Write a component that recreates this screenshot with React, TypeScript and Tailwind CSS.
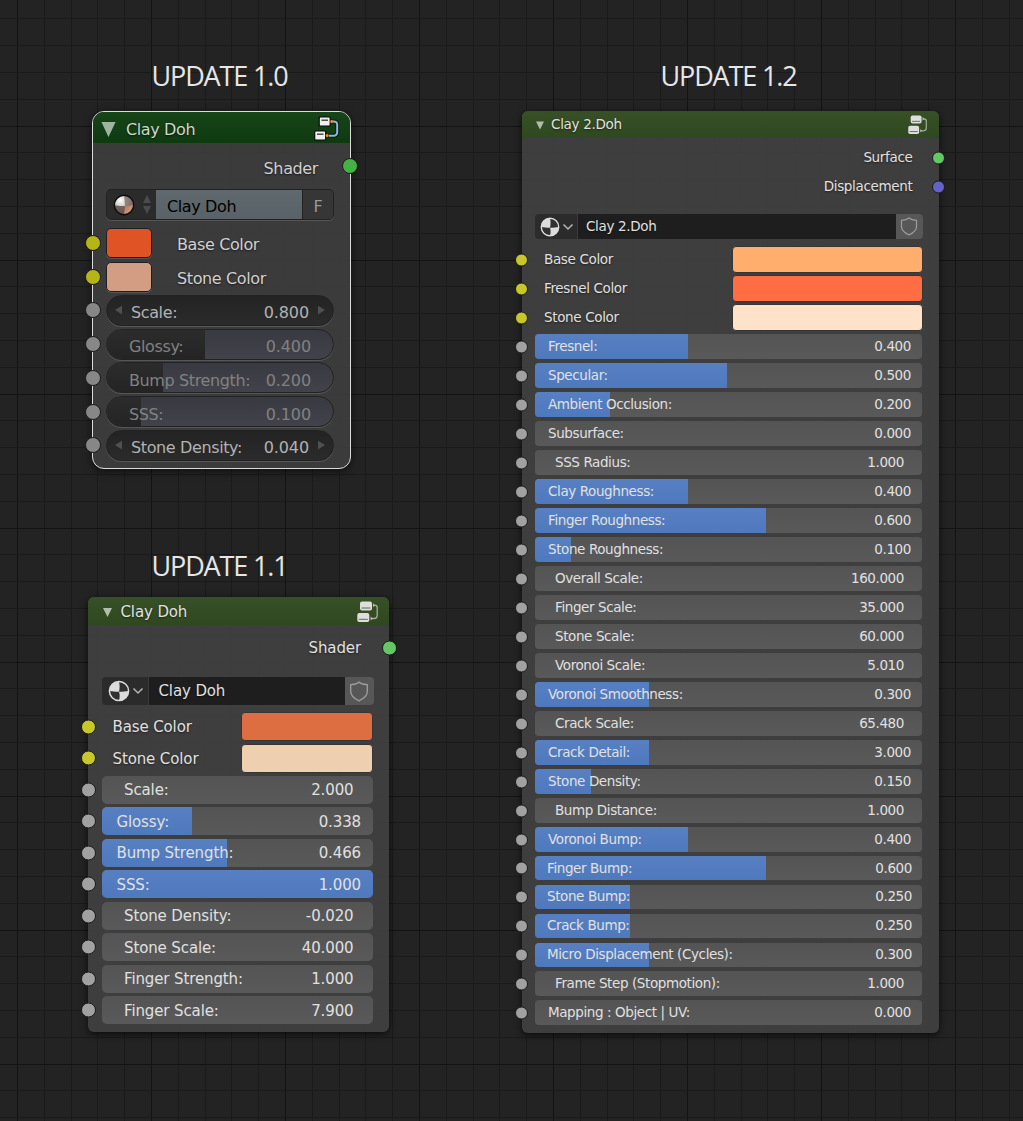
import React from 'react';
import clsx from 'clsx';

type Row = {
  label: string;
  value?: string;
  color?: string;
  fill?: number; // fill width in px, undefined = plain number field
  short?: boolean;
};

const legacyRows: Row[] = [
  { label: 'Base Color', color: '#e05324' },
  { label: 'Stone Color', color: '#d39d84' },
  { label: 'Scale:', value: '0.800' },
  { label: 'Glossy:', value: '0.400', fill: 99 },
  { label: 'Bump Strength:', value: '0.200', fill: 57 },
  { label: 'SSS:', value: '0.100', fill: 35 },
  { label: 'Stone Density:', value: '0.040' },
];

const clayRows: Row[] = [
  { label: 'Base Color', color: '#dc6e42' },
  { label: 'Stone Color', color: '#eecfb0' },
  { label: 'Scale:', value: '2.000' },
  { label: 'Glossy:', value: '0.338', fill: 90 },
  { label: 'Bump Strength:', value: '0.466', fill: 125 },
  { label: 'SSS:', value: '1.000', fill: 271 },
  { label: 'Stone Density:', value: '-0.020' },
  { label: 'Stone Scale:', value: '40.000' },
  { label: 'Finger Strength:', value: '1.000' },
  { label: 'Finger Scale:', value: '7.900' },
];

const clay2Rows: Row[] = [
  { label: 'Base Color', color: '#ffae6d' },
  { label: 'Fresnel Color', color: '#ff6e42' },
  { label: 'Stone Color', color: '#ffe2c9' },
  { label: 'Fresnel:', value: '0.400', fill: 153 },
  { label: 'Specular:', value: '0.500', fill: 192 },
  { label: 'Ambient Occlusion:', value: '0.200', fill: 75 },
  { label: 'Subsurface:', value: '0.000', fill: 0 },
  { label: 'SSS Radius:', value: '1.000' },
  { label: 'Clay Roughness:', value: '0.400', fill: 153 },
  { label: 'Finger Roughness:', value: '0.600', fill: 231 },
  { label: 'Stone Roughness:', value: '0.100', fill: 36 },
  { label: 'Overall Scale:', value: '160.000' },
  { label: 'Finger Scale:', value: '35.000' },
  { label: 'Stone Scale:', value: '60.000' },
  { label: 'Voronoi Scale:', value: '5.010' },
  { label: 'Voronoi Smoothness:', value: '0.300', fill: 114 },
  { label: 'Crack Scale:', value: '65.480' },
  { label: 'Crack Detail:', value: '3.000', fill: 114 },
  { label: 'Stone Density:', value: '0.150', fill: 56 },
  { label: 'Bump Distance:', value: '1.000' },
  { label: 'Voronoi Bump:', value: '0.400', fill: 153 },
  { label: 'Finger Bump:', value: '0.600', fill: 231, short: true },
  { label: 'Stone Bump:', value: '0.250', fill: 95, short: true },
  { label: 'Crack Bump:', value: '0.250', fill: 95, short: true },
  { label: 'Micro Displacement (Cycles):', value: '0.300', fill: 114, short: true },
  { label: 'Frame Step (Stopmotion):', value: '1.000' },
  { label: 'Mapping : Object | UV:', value: '0.000', fill: 0 },
];

const GRID = 26.8;
const gridLines = Array.from({ length: 43 }, (_, i) => i);

const Title = ({ children, className }: { children: React.ReactNode; className?: string }) => (
  <h2
    className={clsx(
      "h-8 whitespace-nowrap font-['Open_Sans','Noto_Sans',sans-serif] text-[27px] leading-8 tracking-[-1.15px] text-[#e6e6e6]",
      className
    )}
  >
    {children}
  </h2>
);

// Sockets sit on the node border
const Socket = ({ className }: { className: string }) => (
  <span className={clsx('absolute top-1/2 -translate-y-1/2 rounded-full border border-[#1c1c1c]', className)} />
);

const NodeTreeIcon = ({ className }: { className?: string }) => (
  <svg viewBox="0 0 21 21" className={className} fill="none">
    <rect x="3" y="0.5" width="12" height="9" rx="2" fill="#dedede" />
    <path d="M4.5 7h9" stroke="#5b6b50" strokeWidth="1" />
    <rect x="0.3" y="12" width="12" height="9" rx="2" fill="#dedede" />
    <path d="M1.8 18.3h9" stroke="#5b6b50" strokeWidth="1" />
    <path d="M16 2.2l2.6 2.2L16 6z" fill="#b5bcae" />
    <path d="M17.5 4.2c2 .1 2.7.8 2.7 2.3v8c0 2-.8 3-3 3h-2.5" stroke="#a6ae9e" strokeWidth="1.3" />
    <path d="M13.6 15.6l2 1.9-2 1.9z" fill="#c5cabf" />
  </svg>
);

const LegacyTreeIcon = () => (
  <svg viewBox="0 0 26 26" className="h-[26px] w-[26px]" fill="none">
    <path d="M16 6.5h3.5c2.4 0 3.7 1.2 3.7 3.4v7c0 2.6-1.3 3.8-4 3.8H14" stroke="#0a200b" strokeWidth="4" />
    <path d="M17 6.5h2.5c2.4 0 3.7 1.2 3.7 3.4v7c0 2.6-1.3 3.8-4 3.8H15" stroke="#8fb4ea" strokeWidth="2" />
    <rect x="5.2" y="2" width="11" height="9" rx="1" fill="#f1eeee" stroke="#0b0b0b" strokeWidth="1.2" />
    <path d="M7.5 5.2h6.5" stroke="#333" strokeWidth="1.3" />
    <rect x="0.7" y="16" width="11" height="9" rx="1" fill="#f1eeee" stroke="#0b0b0b" strokeWidth="1.2" />
    <path d="M3 19.2h6.5" stroke="#333" strokeWidth="1.3" />
    <circle cx="17.7" cy="6.6" r="1.5" fill="#f08a1c" />
    <circle cx="13.2" cy="20.6" r="1.5" fill="#f08a1c" />
  </svg>
);

const MaterialIcon = ({ className }: { className?: string }) => (
  <svg viewBox="0 0 22 22" className={className}>
    <circle cx="11" cy="11" r="9.6" fill="#303030" stroke="#dcdcdc" strokeWidth="1.5" />
    <path d="M11 11.8C7.500 11.800 4 11.500 1.400 11A9.600 9.600 0 0 1 11 1.400c.8 3 .9 7 0 10.400z" fill="#dcdcdc" />
    <path d="M11 11.800c3.500 0 7-.3 9.600-.8A9.600 9.600 0 0 1 11 20.600c.9-3 .9-6 0-8.800z" fill="#dcdcdc" />
  </svg>
);

const LegacyMaterialIcon = () => (
  <svg viewBox="0 0 22 22" className="h-[22px] w-[22px]">
    <defs>
      <radialGradient id="ball" cx="0.32" cy="0.25" r="0.85">
        <stop offset="0" stopColor="#ffffff" />
        <stop offset="0.5" stopColor="#c4bebc" />
        <stop offset="1" stopColor="#8c5a45" />
      </radialGradient>
      <linearGradient id="warm" x1="0" y1="0" x2="1" y2="1">
        <stop offset="0" stopColor="#a5786a" />
        <stop offset="1" stopColor="#f2a672" />
      </linearGradient>
    </defs>
    <circle cx="11" cy="11" r="9.5" fill="url(#ball)" />
    <path d="M12 12c-.2-4-.5-7-1-10.500a9.500 9.500 0 0 1 9.500 9.500c-3 1-5 1-8.500 1z" fill="#765f5b" opacity="0.7" />
    <path d="M12 12c-4 .2-7.500 0-10.500-1A9.500 9.500 0 0 0 11 20.500c.8-3 1-6 1-8.500z" fill="#5f4743" opacity="0.8" />
    <path d="M12 12c3.500 0 5.500 0 8.500-1A9.500 9.500 0 0 1 11 20.500c.8-3 1-6 1-8.500z" fill="url(#warm)" />
    <circle cx="11" cy="11" r="9.7" fill="none" stroke="#0d0d0d" strokeWidth="1.4" />
  </svg>
);

const Chevron = () => (
  <svg viewBox="0 0 12 8" className="h-2 w-3" fill="none">
    <path d="M1.5 1.5L6 6l4.5-4.5" stroke="#b4b4b4" strokeWidth="1.5" />
  </svg>
);

const Shield = ({ className }: { className?: string }) => (
  <svg viewBox="0 0 20 22" className={className} fill="none">
    <path
      d="M10 1.2c2 1.7 5 2.5 8.7 2.6v7.2c0 4.3-3.4 7.3-8.7 9.8-5.3-2.5-8.7-5.5-8.7-9.8V3.8C5 3.7 8 2.9 10 1.2z"
      stroke="#9a9a9a"
      strokeWidth="1.5"
    />
  </svg>
);

const Arrow = ({ flip }: { flip?: boolean }) => (
  <svg viewBox="0 0 8 10" className={clsx('h-[10px] w-[7px]', flip && 'rotate-180')}>
    <path d="M8 0v10L0 5z" fill="#505050" />
  </svg>
);

const LegacyNode = () => (
  <section className="ml-[92px] flex h-[358px] w-[259px] flex-col rounded-xl border border-[#dcdcdc] bg-[#3c3c3c]/97 text-base tracking-[-0.38px] text-[#d0d0d0] shadow-[0_2px_9px_rgba(0,0,0,0.6)] [text-shadow:0_1px_2px_rgba(0,0,0,0.6)]">
    <header className="flex h-[30.5px] items-center rounded-t-[11px] bg-linear-to-b from-[#164518] to-[#0e3a10] pl-[7.5px]">
      <svg viewBox="0 0 15 16" className="mt-[5px] h-[15px] w-[15px]">
        <path d="M0 0h15L7.5 16z" fill="#9db59e" />
      </svg>
      <span className="mt-[6px] ml-[10.5px] text-[#cfd5cf]">Clay Doh</span>
      <span className="mt-px mr-[10px] ml-auto">
        <LegacyTreeIcon />
      </span>
    </header>
    <div className="relative mt-[8px] flex h-[31px] items-center justify-end pr-[32px]">
      <span className="pt-[5px]">Shader</span>
      <Socket className="-right-[8px] h-[16px] w-[16px] bg-[#43b243]" />
    </div>

    <div className="mt-[7.5px] ml-[13px] flex h-[31px] w-[228px] rounded-[5px] border border-[#222] bg-[#2b2b2b] shadow-[0_1px_0_#555] [text-shadow:none]">
      <div className="flex w-[49px] items-center justify-between pr-[5px] pl-[6px]">
        <LegacyMaterialIcon />
        <span className="flex flex-col gap-[3px]">
          <svg viewBox="0 0 8 8" className="h-2 w-2"><path d="M4 0l4 8H0z" fill="#4b4b4b" /></svg>
          <svg viewBox="0 0 8 8" className="h-2 w-2"><path d="M0 0h8L4 8z" fill="#4b4b4b" /></svg>
        </span>
      </div>
      <div className="flex w-[147px] items-center border-r border-[#222] bg-linear-to-b from-[#5f696e] to-[#596266] pt-[5px] pl-[11px] text-black">
        Clay Doh
      </div>
      <div className="flex flex-1 items-center justify-center rounded-r-[4px] bg-[#363636] pt-[5px] text-[#999]">F</div>
    </div>

    <div className="mt-[6px] flex flex-col">
      {legacyRows.map((row) => (
        <div key={row.label} className="relative flex h-[33.75px] items-center pl-[13px]">
          <Socket
            className={clsx('-left-[8px] h-[16px] w-[16px]', row.color ? 'bg-[#b5b516]' : 'bg-[#878787]')}
          />
          {row.color ? (
            <>
              <span
                className="h-[30px] w-[46px] rounded-[5px] border border-[#1f1f1f] shadow-[0_1px_0_#555]"
                style={{ backgroundColor: row.color }}
              />
              <span className="ml-[25px] pt-[5px]">{row.label}</span>
            </>
          ) : (
            <div
              className={clsx(
                'relative flex h-[31px] w-[228px] items-center overflow-hidden rounded-full border border-[#222] shadow-[0_1px_0_#565656] [text-shadow:none]',
                row.fill
                  ? 'bg-linear-to-b from-[#393a41] to-[#42434a] pr-[22px] pl-[22px] text-[#818181]'
                  : 'bg-linear-to-b from-[#232323] to-[#2b2b2b] px-[8px] text-[#b2b2b2]'
              )}
            >
              {row.fill ? (
                <span
                  className="absolute inset-y-0 left-0 bg-linear-to-b from-[#2c2c2c] to-[#242424]"
                  style={{ width: row.fill - 1 }}
                />
              ) : (
                <Arrow />
              )}
              <span className={clsx('relative pt-[6px]', !row.fill && 'ml-[9px]')}>{row.label}</span>
              <span className={clsx('relative ml-auto pt-[6px] tracking-[-0.1px]', !row.fill && 'mr-[9px]')}>
                {row.value}
              </span>
              {!row.fill && <Arrow flip />}
            </div>
          )}
        </div>
      ))}
    </div>
  </section>
);

const ClayNode = () => (
  <section className="ml-[88px] flex h-[435px] w-[301px] flex-col rounded-md bg-[#3f3f3f]/97 text-[15px] tracking-[-0.12px] text-[#e0e0e0] shadow-[0_2px_7px_rgba(0,0,0,0.7)] [text-shadow:0_1px_2px_rgba(0,0,0,0.5)]">
    <header className="flex h-[28px] items-center rounded-t-md bg-linear-to-b from-[#375026] to-[#304820] pl-[14.5px]">
      <svg viewBox="0 0 9 9" className="mt-[3px] h-[9px] w-[9px]">
        <path d="M0 0h9L4.5 9z" fill="#b3bda9" />
      </svg>
      <span className="mt-[2px] ml-[9px]">Clay Doh</span>
      <NodeTreeIcon className="mt-px mr-[11px] ml-auto h-[21px] w-[21px]" />
    </header>
    <div className="relative mt-[7px] flex h-[31px] items-center justify-end pr-[28px]">
      <span className="pt-[2px]">Shader</span>
      <Socket className="-right-[7.5px] h-[15px] w-[15px] bg-[#63c763]" />
    </div>

    <div className="mt-[14px] ml-[14px] flex h-[28px] w-[272px] overflow-hidden rounded-[4px]">
      <div className="flex w-[46px] items-center justify-between bg-[#2b2b2b] pr-[4px] pl-[6px]">
        <MaterialIcon className="h-[22px] w-[22px]" />
        <Chevron />
      </div>
      <div className="flex flex-1 items-center border-l border-[#3a3a3a] bg-[#1e1e1e] pl-[9.5px]">Clay Doh</div>
      <div className="flex w-[29px] items-center justify-center bg-[#575757] pr-[2px]">
        <Shield className="h-[21px] w-5" />
      </div>
    </div>

    <div className="mt-[6px] flex flex-col">
      {clayRows.map((row) => (
        <div key={row.label} className="relative flex h-[31.5px] items-center pl-[14px]">
          <Socket className={clsx('-left-[7.5px] h-[15px] w-[15px]', row.color ? 'bg-[#c7c729]' : 'bg-[#a1a1a1]')} />
          {row.color ? (
            <>
              <span className="w-[139px] pt-[2px] pl-[10.5px]">{row.label}</span>
              <span
                className="h-[29px] w-[132px] rounded-[4px] border border-[#353535]"
                style={{ backgroundColor: row.color }}
              />
            </>
          ) : (
            <div className="relative flex h-[28px] w-[270.5px] items-center overflow-hidden rounded-[5px] bg-linear-to-b from-[#545454] to-[#595959] [text-shadow:none]">
              {!!row.fill && (
                <span
                  className="absolute inset-y-0 left-0 bg-linear-to-b from-[#5680c2] to-[#4f79bd]"
                  style={{ width: row.fill }}
                />
              )}
              <span className={clsx('relative pt-[2px]', row.fill === undefined ? 'ml-[22px]' : 'ml-[14.5px]')}>
                {row.label}
              </span>
              <span className={clsx('relative ml-auto pt-[2px]', row.fill === undefined ? 'mr-[19px]' : 'mr-[11.5px]')}>
                {row.value}
              </span>
            </div>
          )}
        </div>
      ))}
    </div>
  </section>
);

const Clay2Node = () => (
  <section className="flex h-[922px] w-[417px] flex-col rounded-md bg-[#3f3f3f]/97 text-[13.5px] tracking-[-0.4px] text-[#e0e0e0] shadow-[0_2px_7px_rgba(0,0,0,0.7)] [text-shadow:0_1px_2px_rgba(0,0,0,0.5)]">
    <header className="flex h-[26.5px] items-center rounded-t-md bg-linear-to-b from-[#375026] to-[#304820] pl-[13.5px] tracking-[-0.3px]">
      <svg viewBox="0 0 9 9" className="mt-[3px] h-[9px] w-[8px]">
        <path d="M0 0h9L4.5 9z" fill="#b3bda9" />
      </svg>
      <span className="ml-[7.5px]">Clay 2.Doh</span>
      <NodeTreeIcon className="mt-px mr-[12.5px] ml-auto h-[19px] w-[19px]" />
    </header>
    <div className="mt-[5.5px] flex flex-col tracking-[-0.33px]">
      <div className="relative flex h-[29px] items-center justify-end pr-[26.5px]">
        <span>Surface</span>
        <Socket className="-right-[6px] h-[13px] w-[13px] bg-[#63c763]" />
      </div>
      <div className="relative flex h-[29px] items-center justify-end pr-[26.5px]">
        <span>Displacement</span>
        <Socket className="-right-[6px] h-[13px] w-[13px] bg-[#6363c7]" />
      </div>
    </div>

    <div className="mt-[13px] ml-[13px] flex h-[25px] w-[388px] overflow-hidden rounded-[4px] tracking-[-0.33px]">
      <div className="flex w-[42px] items-center justify-between bg-[#2b2b2b] pr-[3px] pl-[5px]">
        <MaterialIcon className="h-5 w-5" />
        <Chevron />
      </div>
      <div className="flex flex-1 items-center border-l border-[#3a3a3a] bg-[#1e1e1e] pl-[8px]">Clay 2.Doh</div>
      <div className="flex w-[27px] items-center justify-center bg-[#575757] pr-[2px]">
        <Shield className="h-[19px] w-[18px]" />
      </div>
    </div>

    <div className="mt-[6px] flex flex-col">
      {clay2Rows.map((row) => (
        <div
          key={row.label}
          className={clsx('relative flex items-center pl-[13px]', row.short ? 'h-[28.75px]' : 'h-[29px]')}
        >
          <Socket className={clsx('-left-[7px] h-[13px] w-[13px]', row.color ? 'bg-[#c7c729]' : 'bg-[#a1a1a1]')} />
          {row.color ? (
            <>
              <span className="w-[197px] pl-[9px] tracking-[-0.35px]">{row.label}</span>
              <span
                className="h-[27px] w-[191px] rounded-[4px] border border-[#353535]"
                style={{ backgroundColor: row.color }}
              />
            </>
          ) : (
            <div
              className={clsx(
                'relative flex w-[387px] items-center overflow-hidden rounded-[4px] bg-linear-to-b from-[#545454] to-[#595959] [text-shadow:none]',
                row.short ? 'h-[24px]' : 'h-[25px]'
              )}
            >
              {!!row.fill && (
                <span
                  className="absolute inset-y-0 left-0 bg-linear-to-b from-[#5680c2] to-[#4f79bd]"
                  style={{ width: row.fill }}
                />
              )}
              <span
                className={clsx(
                  'relative',
                  row.fill === undefined ? 'ml-[20px]' : row.short ? 'ml-[12px]' : 'ml-[13px]'
                )}
              >
                {row.label}
              </span>
              <span
                className={clsx(
                  'relative ml-auto',
                  row.fill === undefined ? 'mr-[18px]' : row.short ? 'mr-[10px]' : 'mr-[11px]'
                )}
              >
                {row.value}
              </span>
            </div>
          )}
        </div>
      ))}
    </div>
  </section>
);

const App = () => {
  return (
    <div className="relative h-[1121px] w-[1023px] overflow-hidden bg-[#232323] font-['DejaVu_Sans',sans-serif] leading-none whitespace-nowrap">
      {/* Editor grid */}
      <svg className="absolute inset-0 h-full w-full" shapeRendering="crispEdges">
        {gridLines.map((i) => (
          <rect
            key={`v${i}`}
            x={Math.floor(17.4 + i * GRID)}
            y="0"
            width="1"
            height="1121"
            fill={i % 5 === 0 ? '#131313' : '#1a1a1a'}
          />
        ))}
        {gridLines.map((i) => (
          <rect
            key={`h${i}`}
            x="0"
            y={Math.floor(18.8 + i * GRID)}
            width="1023"
            height="1"
            fill={i % 5 === 4 ? '#131313' : '#1a1a1a'}
          />
        ))}
      </svg>

      {/* Nodes */}
      <main className="relative flex">
        <div className="flex w-[522px] flex-col pt-[60px]">
          <Title className="ml-[151.5px]">UPDATE 1.0</Title>
          <div className="mt-[19px]">
            <LegacyNode />
          </div>
          <Title className="mt-[81px] ml-[151.5px]">UPDATE 1.1</Title>
          <div className="mt-[15px]">
            <ClayNode />
          </div>
        </div>
        <div className="flex flex-col pt-[60px]">
          <Title className="ml-[138.5px]">UPDATE 1.2</Title>
          <div className="mt-[19px]">
            <Clay2Node />
          </div>
        </div>
      </main>
    </div>
  );
};

export default App;
